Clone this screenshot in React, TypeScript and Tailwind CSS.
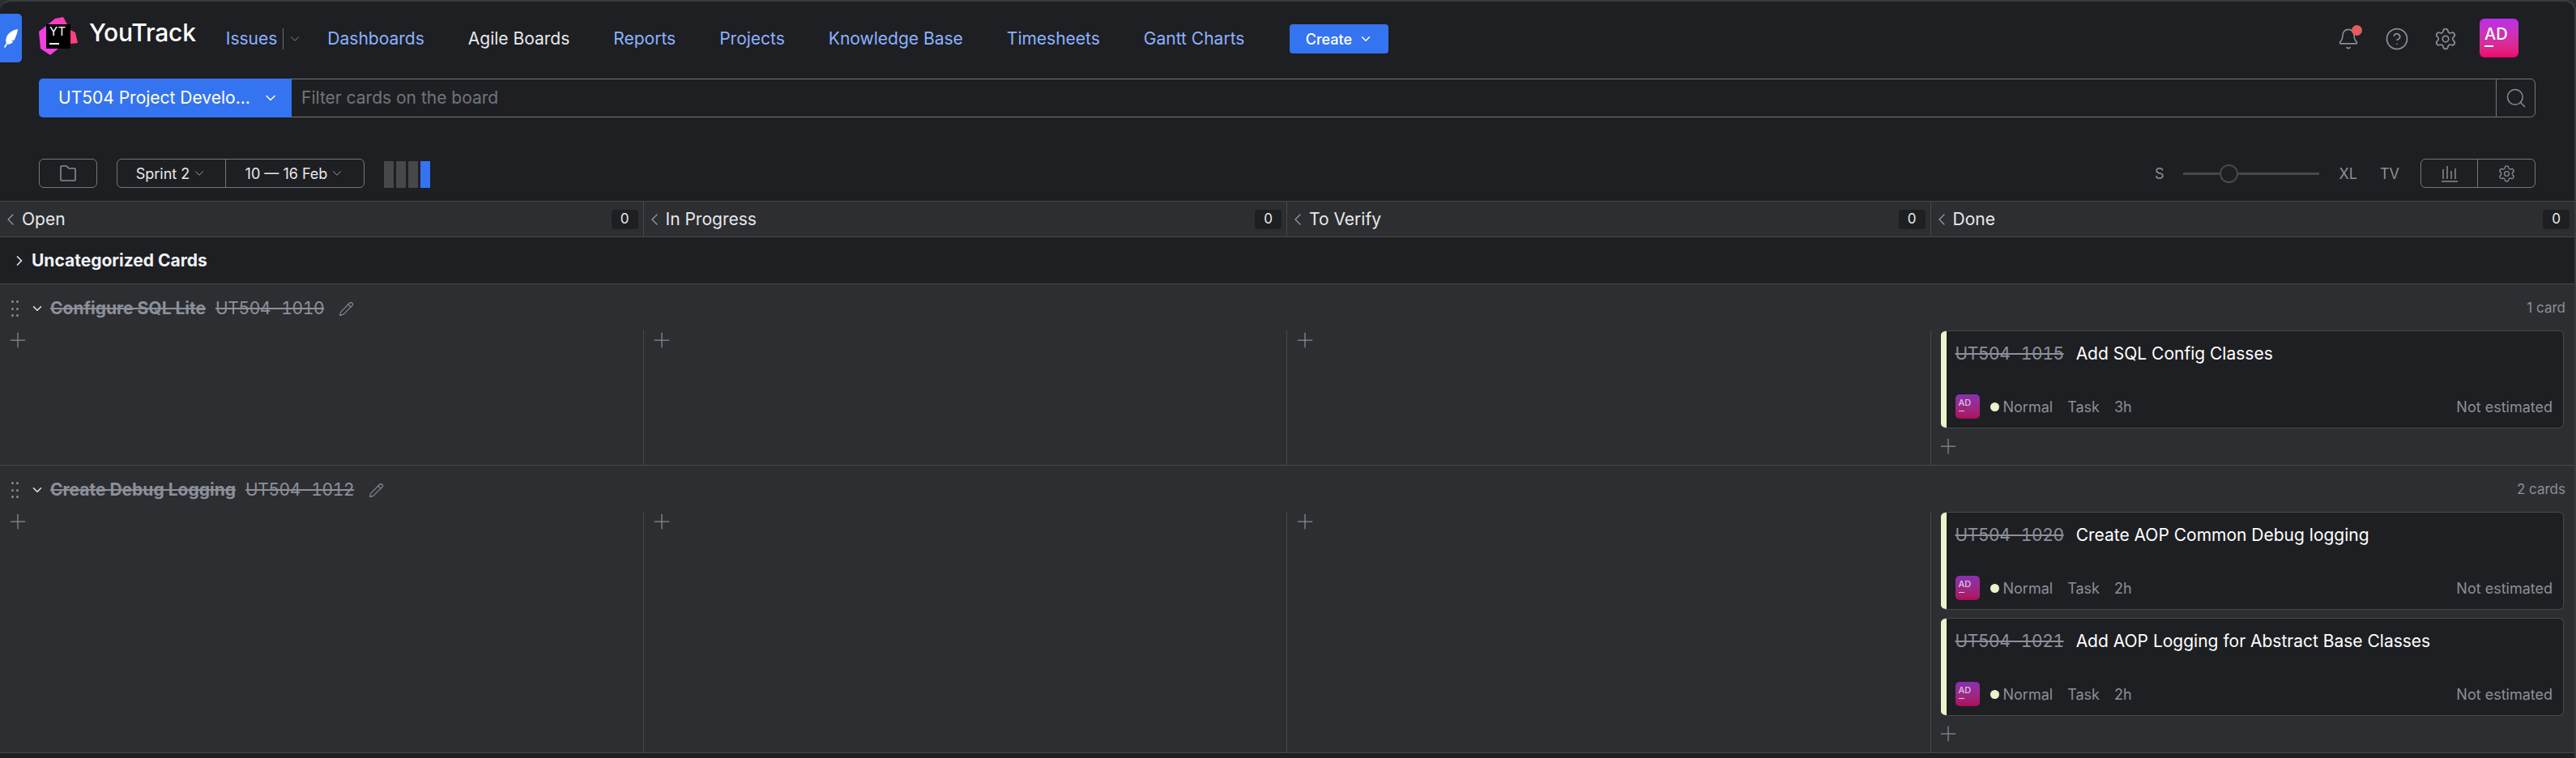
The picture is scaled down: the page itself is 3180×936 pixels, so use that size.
import React from 'react';
import { Bell, ChevronDown, ChevronLeft, ChevronRight, CircleHelp, Pencil, Plus, Search, Settings } from 'lucide-react';

const navLinks = ['Dashboards', 'Agile Boards', 'Reports', 'Projects', 'Knowledge Base', 'Timesheets', 'Gantt Charts'];
const columns = ['Open', 'In Progress', 'To Verify', 'Done'];

interface CardData {
  id: string;
  title: string;
  time: string;
}

const Logo = () => (
  <div className="relative mt-[6px] h-[48px] w-[48px] shrink-0">
    <svg viewBox="0 0 48 48" className="absolute inset-0 h-full w-full">
      <defs>
        <linearGradient id="logoPink" x1="0" y1="1" x2="1" y2="0">
          <stop offset="0.5" stopColor="#f23fe0" />
          <stop offset="1" stopColor="#f5409f" />
        </linearGradient>
      </defs>
      <path d="M0 18 L20 2 L30 0 L35 9 L24 39 L14 47 L2 39 Z" fill="url(#logoPink)" />
      <path d="M39 16 L45 19 L48 32 L39 33 Z" fill="#fb4180" />
    </svg>
    <div className="absolute left-[9px] top-[9px] h-[30px] w-[30px] bg-black pl-[4px] pt-[1px] text-[15px] leading-[16px] text-white">
      YT
      <div className="mt-[6px] h-[2px] w-[12px] bg-white" />
    </div>
  </div>
);

const Avatar = () => (
  <div className="flex h-[30px] w-[30px] flex-col rounded-[5px] bg-gradient-to-b from-[#8a2fb0] to-[#ad0a5c] pl-[4px] pt-[4px] text-[11px] font-medium leading-[13px] text-[#d9c6dd]">
    AD
    <div className="mt-[3px] h-px w-[7px] bg-[#d9c6dd]" />
  </div>
);

const Card = ({ id, title, time }: CardData) => (
  <div className="flex h-[121px] overflow-hidden rounded-[6px] border border-[#47484c] border-l-0 bg-[#1e1f23]">
    <div className="w-[7px] shrink-0 bg-[#e8f5c8]" />
    <div className="flex min-w-0 flex-1 flex-col pl-[11px] pr-[13px]">
      <div className="mt-[14px] flex h-[28px] items-center gap-[15px] text-[21px]">
        <span className="tracking-[-0.4px] text-[#8b9099] tabular-nums line-through">{id}</span>
        <span className="text-[#ffffff]">{title}</span>
      </div>
      <div className="mt-[36px] flex items-center text-[18px] text-[#8b8f97]">
        <Avatar />
        <span className="ml-[13px] h-[11px] w-[11px] rounded-full bg-[#e8f5c8]" />
        <span className="ml-[5px]">Normal</span>
        <span className="ml-[18px]">Task</span>
        <span className="ml-[18px]">{time}</span>
        <span className="ml-auto">Not estimated</span>
      </div>
    </div>
  </div>
);

const AddButton = () => <Plus size={30} strokeWidth={1} className="text-[#8a8c91]" />;

const EmptyCell = () => (
  <div className="min-w-0 border-r border-[#47484c] pl-[7px]">
    <div className="-mt-[3px]">
      <AddButton />
    </div>
  </div>
);

const Swimlane = ({ title, id, count, cards }: { title: string; id: string; count: string; cards: CardData[] }) => (
  <div className="border-b border-[#47484c] bg-[#2d2e32]">
    <div className="flex h-[57px] items-center pl-[14px] pr-[11px] pt-[3px]">
      <div className="grid h-[20px] w-[12px] grid-cols-2 content-between justify-between">
        {[0, 1, 2, 3, 4, 5].map((dot) => (
          <span key={dot} className="h-[3px] w-[3px] rounded-full bg-[#8a8c91]" />
        ))}
      </div>
      <ChevronDown size={18} strokeWidth={2} className="ml-[11px] text-[#e6e7e9]" />
      <span className="ml-[7px] text-[21px] font-bold text-[#8b9099] line-through">{title}</span>
      <span className="ml-[12px] text-[21px] tracking-[-0.4px] text-[#8b9099] tabular-nums line-through">{id}</span>
      <Pencil size={19} strokeWidth={1.4} className="ml-[18px] text-[#8a8c91]" />
      <span className="ml-auto text-[17px] text-[#8b8f97]">{count}</span>
    </div>
    <div className="grid grid-cols-4 items-stretch">
      <EmptyCell />
      <EmptyCell />
      <EmptyCell />
      <div className="flex min-w-0 flex-col gap-[10px] pl-[12px] pr-[13px]">
        {cards.map((card) => (
          <Card key={card.id} {...card} />
        ))}
        <div className="-ml-[6px] -mt-[3px] h-[38px]">
          <AddButton />
        </div>
      </div>
    </div>
  </div>
);

export default function App() {
  return (
    <div className="flex h-[936px] w-[3180px] flex-col overflow-hidden bg-[#2d2e32] font-['Inter',sans-serif] text-[21px]">
      <div className="flex h-full flex-col overflow-hidden rounded-t-[14px] border-r-2 border-t-2 border-[#3a3b3f] bg-[#1e1f23]">
        {/* top navigation */}
        <div className="relative flex h-[95px] shrink-0 items-start pl-[48px] pr-[69px] pt-[13px]">
          <div className="absolute left-0 top-[15px] flex h-[60px] w-[27px] items-center justify-center rounded-r-[5px] bg-[#3574f0]">
            <svg viewBox="0 0 20 24" className="h-[23px] w-[19px]" fill="#ffffff">
              <path d="M19 0 C12 1 6 5 4 11 C3.2 14 3.4 16 4 18 L1 23 L2.4 24 L5.4 19.4 C8 20 11 19 13 16 L10 15.4 L14.4 14 C16.4 10 18.4 5 19 0 Z" />
            </svg>
          </div>
          <Logo />
          <div className="ml-[14px] mt-[7px] text-[30px] font-medium leading-[36px] tracking-[-0.2px] text-white">YouTrack</div>
          <div className="ml-[37px] mt-[19px] flex h-[27px] items-center text-[#8cb2ff]">
            <span>Issues</span>
            <span className="ml-[7px] h-[26px] w-px bg-[#6c6e74]" />
            <ChevronDown size={18} strokeWidth={1.3} className="ml-[5px] text-[#8a8c91]" />
          </div>
          <nav className="ml-[31px] mt-[19px] flex h-[27px] items-center gap-[54px] text-[#8cb2ff]">
            {navLinks.map((link) => (
              <a key={link} className={link === 'Agile Boards' ? 'text-[#e8e9eb]' : ''}>
                {link}
              </a>
            ))}
          </nav>
          <button className="ml-[56px] mt-[15px] flex h-[36px] w-[122px] items-center justify-center gap-[8px] rounded-[4px] bg-[#3574f0] text-[18px] font-medium text-white">
            Create
            <ChevronDown size={18} strokeWidth={2} />
          </button>
          <div className="ml-auto mt-[10px] flex items-center">
            <div className="relative">
              <Bell size={28} strokeWidth={1.4} className="text-[#8a8c91]" />
              <span className="absolute -right-[3px] -top-[3px] h-[13px] w-[13px] rounded-full bg-[#e55c5c]" />
            </div>
            <CircleHelp size={30} strokeWidth={1.4} className="ml-[31px] text-[#8a8c91]" />
            <Settings size={30} strokeWidth={1.4} className="ml-[30px] text-[#8a8c91]" />
            <div className="-mt-[2px] ml-[27px] flex h-[48px] w-[48px] flex-col rounded-[6px] bg-gradient-to-b from-[#b92ce8] to-[#ec0069] pl-[6px] pt-[7px] text-[20px] font-medium leading-[24px] text-white">
              AD
              <div className="mt-[2px] h-[2px] w-[11px] bg-white" />
            </div>
          </div>
        </div>

        {/* board search */}
        <div className="flex h-[48px] shrink-0 pl-[48px] pr-[48px]">
          <button className="flex w-[312px] shrink-0 items-center justify-between rounded-l-[5px] bg-[#3574f0] pl-[24px] pr-[16px] text-white">
            UT504 Project Develo...
            <ChevronDown size={20} strokeWidth={1.8} />
          </button>
          <div className="flex flex-1 items-center border-y border-[#75767a] pl-[12px] text-[#72747a]">Filter cards on the board</div>
          <div className="flex w-[49px] items-center justify-center rounded-r-[6px] border border-[#75767a]">
            <Search size={28} strokeWidth={1.3} className="text-[#8a8c91]" />
          </div>
        </div>

        {/* sprint toolbar */}
        <div className="flex h-[103px] shrink-0 items-start pl-[48px] pr-[48px] pt-[51px]">
          <button className="flex h-[36px] w-[72px] items-center justify-center rounded-[6px] border border-[#75767a]">
            <svg viewBox="0 0 22 22" className="h-[22px] w-[22px]" fill="none" stroke="#8a8c91" strokeWidth="1.6">
              <path d="M2 3 a1 1 0 0 1 1 -1 H9 L12 5 H19 a1 1 0 0 1 1 1 V19 a1 1 0 0 1 -1 1 H3 a1 1 0 0 1 -1 -1 Z" />
            </svg>
          </button>
          <div className="ml-[24px] flex h-[36px] overflow-hidden rounded-[6px] border border-[#75767a] text-[18px] text-[#e8e9eb]">
            <div className="flex w-[134px] items-center justify-center gap-[3px] border-r border-[#75767a]">
              Sprint 2
              <ChevronDown size={18} strokeWidth={1.3} className="text-[#9a9ca1]" />
            </div>
            <div className="flex w-[170px] items-center justify-center gap-[3px]">
              10 — 16 Feb
              <ChevronDown size={18} strokeWidth={1.3} className="text-[#9a9ca1]" />
            </div>
          </div>
          <div className="ml-[24px] mt-[3px] flex h-[33px] gap-[3px]">
            <span className="w-[12px] bg-[#47484c]" />
            <span className="w-[12px] bg-[#47484c]" />
            <span className="w-[12px] bg-[#47484c]" />
            <span className="w-[12px] bg-[#3574f0]" />
          </div>
          <div className="ml-auto flex h-[36px] items-center text-[18px] text-[#8b8f97]">
            <span>S</span>
            <div className="relative ml-[24px] h-[3px] w-[168px] bg-[#47484c]">
              <span className="absolute left-[45px] top-[-10px] h-[23px] w-[23px] rounded-full border-2 border-[#47484c] bg-[#1e1f23]" />
            </div>
            <span className="ml-[24px]">XL</span>
            <span className="ml-[28px]">TV</span>
          </div>
          <div className="ml-[26px] flex h-[36px] rounded-[6px] border border-[#75767a]">
            <div className="flex w-[70px] items-center justify-center border-r border-[#75767a]">
              <svg viewBox="0 0 22 24" className="h-[24px] w-[22px]" fill="none" stroke="#8a8c91" strokeWidth="1.5">
                <path d="M3 7 V19 M8 3 V19 M13 9 V19 M18 6 V19 M1 22 H21" />
              </svg>
            </div>
            <div className="flex w-[70px] items-center justify-center">
              <Settings size={23} strokeWidth={1.4} className="text-[#8a8c91]" />
            </div>
          </div>
        </div>

        {/* column headers */}
        <div className="grid h-[45px] shrink-0 grid-cols-4 border-y border-[#47484c] bg-[#2d2e32]">
          {columns.map((column, index) => (
            <div key={column} className={`flex items-center pl-px pr-[6px] ${index < 3 ? 'border-r border-[#47484c]' : ''}`}>
              <ChevronLeft size={24} strokeWidth={1.2} className="text-[#9a9ca1]" />
              <span className="ml-[2px] text-[#e8e9eb]">{column}</span>
              <span className="ml-auto flex h-[24px] w-[33px] items-center justify-center rounded-[4px] bg-[#1e1f23] text-[17px] text-[#e8e9eb]">0</span>
            </div>
          ))}
        </div>

        {/* swimlanes */}
        <div className="flex h-[58px] shrink-0 items-center border-b border-[#47484c] pl-[14px]">
          <ChevronRight size={20} strokeWidth={2} className="text-[#e8e9eb]" />
          <span className="ml-[5px] font-bold text-[#f0f1f3]">Uncategorized Cards</span>
        </div>
        <Swimlane
          title="Configure SQL Lite"
          id="UT504-1010"
          count="1 card"
          cards={[{ id: 'UT504-1015', title: 'Add SQL Config Classes', time: '3h' }]}
        />
        <Swimlane
          title="Create Debug Logging"
          id="UT504-1012"
          count="2 cards"
          cards={[
            { id: 'UT504-1020', title: 'Create AOP Common Debug logging', time: '2h' },
            { id: 'UT504-1021', title: 'Add AOP Logging for Abstract Base Classes', time: '2h' },
          ]}
        />
      </div>
    </div>
  );
}
